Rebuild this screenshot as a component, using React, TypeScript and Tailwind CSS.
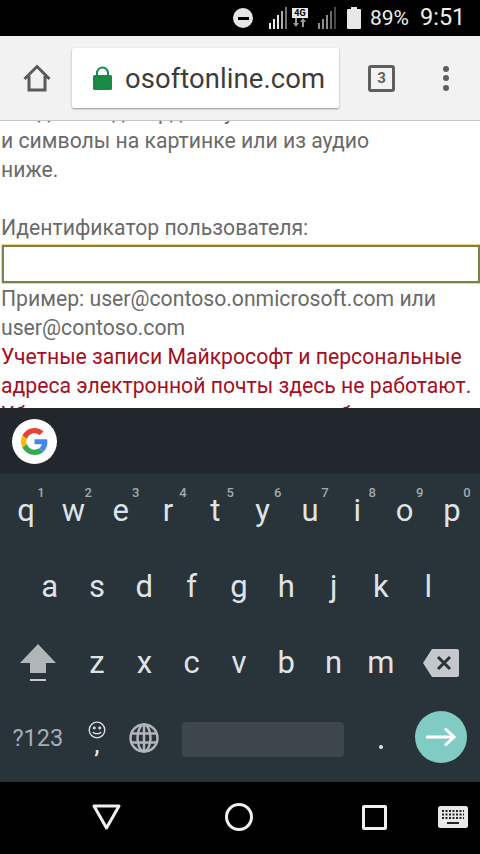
import type { ReactNode } from "react";

const topRow: Array<[string, string]> = [
  ["q", "1"],
  ["w", "2"],
  ["e", "3"],
  ["r", "4"],
  ["t", "5"],
  ["y", "6"],
  ["u", "7"],
  ["i", "8"],
  ["o", "9"],
  ["p", "0"]
];
const middleRow = ["a", "s", "d", "f", "g", "h", "j", "k", "l"];
const bottomRow = ["z", "x", "c", "v", "b", "n", "m"];

function Key({ label, hint }: { label: string; hint?: string }) {
  return (
    <div className="relative flex h-full w-[47.33px] items-center justify-center pb-[4px] text-[31px] leading-none text-[#dfe3e6]">
      {label}
      {hint && (
        <span className="absolute top-[12px] right-[5px] text-[13px] leading-none font-medium text-[#a3a9ad]">
          {hint}
        </span>
      )}
    </div>
  );
}

function SignalBars({ color }: { color: string }) {
  return (
    <svg width="18" height="22" viewBox="0 0 18 22" fill={color}>
      <rect x="0" y="16" width="2" height="6" />
      <rect x="4" y="12" width="2" height="10" />
      <rect x="8" y="8" width="2" height="14" />
      <rect x="12" y="4" width="2" height="18" opacity="0.75" />
      <rect x="16" y="0" width="2" height="22" opacity="0.5" />
    </svg>
  );
}

function StatusBar() {
  return (
    <div className="flex h-9 shrink-0 items-center bg-black pl-[233px] text-white">
      <div className="flex h-5 w-5 items-center justify-center rounded-full bg-[#e6e6e6]">
        <div className="h-[3px] w-[11px] bg-black" />
      </div>
      <div className="ml-[16px]">
        <SignalBars color="#e8e8e8" />
      </div>
      <div className="ml-[5px] flex w-[16px] flex-col items-center self-start pt-[8px]">
        <div className="flex h-[10px] w-[16px] items-center justify-center bg-[#e8e8e8] text-[9px] leading-none font-bold text-black">
          4G
        </div>
        <svg width="14" height="9" viewBox="0 0 14 9" fill="#9a9a9a">
          <path d="M2 0h2v5h2L3 9 0 5h2zM10 0l3 4h-2v5H9V4H7z" />
        </svg>
      </div>
      <div className="ml-[10px]">
        <SignalBars color="#8d8d8d" />
      </div>
      <svg className="ml-[11px]" width="14" height="22" viewBox="0 0 14 22" fill="#e8e8e8">
        <path d="M4 0h6v2h3a1 1 0 0 1 1 1v18a1 1 0 0 1-1 1H1a1 1 0 0 1-1-1V3a1 1 0 0 1 1-1h3z" />
      </svg>
      <span className="ml-[9px] text-[21px] leading-none text-[#eeeeee]">89%</span>
      <span className="ml-[11px] text-[23.500px] leading-none text-[#eeeeee]">9:51</span>
    </div>
  );
}

function Toolbar() {
  return (
    <div className="flex h-[85px] shrink-0 items-center border-b border-[#c4c4c4] bg-[#f2f2f2]">
      <svg className="ml-[23px]" width="28" height="28" viewBox="0 0 28 28" fill="none" stroke="#5a5a5a" strokeWidth="3">
        <path d="M1.500 15 14 2.500 26.500 15M6 12v14h16V12" strokeLinejoin="miter" />
      </svg>
      <div className="ml-[21px] flex h-[60px] w-[267px] items-center rounded-[2px] bg-white pl-[21px] shadow-[0_1px_2px_rgba(0,0,0,0.4)]">
        <svg width="19" height="24" viewBox="0 0 19 24" fill="#188a45">
          <path d="M4 10V7a5.500 5.500 0 0 1 11 0v3" fill="none" stroke="#188a45" strokeWidth="2" />
          <rect x="0" y="9" width="19" height="15" rx="1.500" />
        </svg>
        <span className="ml-[13px] pt-[4px] text-[27.400px] leading-none tracking-[0.1px] text-[#3c3c3c]">osoftonline.com</span>
      </div>
      <div className="ml-[29px] flex h-[27px] w-[27px] items-center justify-center rounded-[3px] border-[3px] border-[#5f5f5f] text-[15px] leading-none font-bold text-[#5f5f5f]">
        3
      </div>
      <div className="ml-[48px] flex flex-col gap-[3.500px]">
        <div className="h-[6px] w-[6px] rounded-full bg-[#5f5f5f]" />
        <div className="h-[6px] w-[6px] rounded-full bg-[#5f5f5f]" />
        <div className="h-[6px] w-[6px] rounded-full bg-[#5f5f5f]" />
      </div>
    </div>
  );
}

function PageContent() {
  return (
    <div className="h-[287px] shrink-0 overflow-hidden bg-white pl-[1px] text-[21.200px] leading-[29px] text-[#6a6a6a]">
      <div className="-mt-[24px] whitespace-nowrap">
        <p>Введите подтвердив буквы</p>
        <p>и символы на картинке или из аудио</p>
        <p>ниже.</p>
        <p className="mt-[29px]">Идентификатор пользователя:</p>
        <div className="mt-[3px] mb-[1px] ml-[1px] h-[38px] w-[478px] border-2 border-[#7d8048] bg-white shadow-[0_0_0_1px_#f0d48c]" />
        <p>Пример: user@contoso.onmicrosoft.com или</p>
        <p>user@contoso.com</p>
        <div className="text-[#a50e1e]">
          <p>Учетные записи Майкрософт и персональные</p>
          <p>адреса электронной почты здесь не работают.</p>
          <p>Убедитесь, что вы используете рабочую</p>
        </div>
      </div>
    </div>
  );
}

function GoogleLogo() {
  return (
    <div className="flex h-[45px] w-[45px] items-center justify-center rounded-full bg-white">
      <svg width="27" height="27" viewBox="0 0 48 48">
        <path fill="#EA4335" d="M24 9.500c3.500 0 6.700 1.200 9.200 3.600l6.900-6.900C35.900 2.400 30.500 0 24 0 14.600 0 6.500 5.400 2.600 13.200l8 6.200C12.400 13.700 17.700 9.500 24 9.500z" />
        <path fill="#4285F4" d="M46.900 24.500c0-1.600-.1-3.100-.4-4.500H24v9h12.900c-.6 3-2.200 5.500-4.700 7.200l7.700 6c4.500-4.200 7-10.300 7-17.700z" />
        <path fill="#FBBC05" d="M10.500 28.600c-.5-1.400-.8-3-.8-4.600s.3-3.200.8-4.600l-8-6.200C.9 16.500 0 20.100 0 24s.9 7.500 2.600 10.800l7.900-6.200z" />
        <path fill="#34A853" d="M24 48c6.500 0 11.900-2.100 15.900-5.800l-7.700-6c-2.200 1.400-4.900 2.300-8.200 2.300-6.300 0-11.600-4.200-13.500-9.900l-8 6.200C6.500 42.600 14.600 48 24 48z" />
      </svg>
    </div>
  );
}

function KeyRow({ children, className }: { children: ReactNode; className: string }) {
  return <div className={`flex items-stretch ${className}`}>{children}</div>;
}

function Keyboard() {
  return (
    <div className="flex-1 bg-[#29333a]">
      <div className="flex h-[66px] items-center bg-[#21272c] pl-[12px]">
        <GoogleLogo />
      </div>
      <KeyRow className="h-[76px] pl-[2.330px]">
        {topRow.map(([label, hint]) => (
          <Key key={label} label={label} hint={hint} />
        ))}
      </KeyRow>
      <KeyRow className="h-[76px] pl-[26px]">
        {middleRow.map((label) => (
          <Key key={label} label={label} />
        ))}
      </KeyRow>
      <KeyRow className="h-[76px] pl-[2.330px]">
        <div className="flex w-[71px] items-center justify-center pb-[2px]">
          <svg width="36" height="38" viewBox="0 0 36 38" fill="#b0b5b8">
            <path d="M18 0 36 19H26V29H10V19H0z" />
            <rect x="10" y="35" width="16" height="2" fill="#c4c8ca" />
          </svg>
        </div>
        {bottomRow.map((label) => (
          <Key key={label} label={label} />
        ))}
        <div className="flex w-[73px] items-center justify-center pb-[2px]">
          <svg width="36" height="28" viewBox="0 0 36 28">
            <path d="M9 0h25a2 2 0 0 1 2 2v24a2 2 0 0 1-2 2H9L0 14z" fill="#c4c7cb" />
            <path d="M15 8l12 12M27 8 15 20" stroke="#29333a" strokeWidth="3" />
          </svg>
        </div>
      </KeyRow>
      <KeyRow className="h-[80px] pl-[2.330px]">
        <div className="flex w-[71px] items-center justify-center pb-[6px] text-[23.500px] leading-none text-[#a8adb1]">
          ?123
        </div>
        <div className="flex w-[47.33px] flex-col items-center justify-center pb-[8px] leading-none text-[#dfe3e6]">
          <svg width="18" height="18" viewBox="0 0 18 18" fill="none" stroke="#dfe3e6" strokeWidth="1.300">
            <circle cx="9" cy="9" r="7.800" />
            <circle cx="6.300" cy="7" r="0.800" fill="#dfe3e6" />
            <circle cx="11.700" cy="7" r="0.800" fill="#dfe3e6" />
            <path d="M5 11c1 2.200 7 2.200 8 0" />
          </svg>
          <span className="h-[16px] text-[24px] leading-[12px] font-medium">,</span>
        </div>
        <div className="flex w-[47.33px] items-center justify-center pb-[8px]">
          <svg width="30" height="30" viewBox="0 0 30 30" fill="none" stroke="#b0b5b8" strokeWidth="2.500">
            <circle cx="15" cy="15" r="13.500" />
            <ellipse cx="15" cy="15" rx="6.500" ry="13.500" />
            <path d="M15 1.500v27M2.500 10.500h25M2.500 19.500h25" />
          </svg>
        </div>
        <div className="flex w-[189.700px] items-center justify-center pb-[6px]">
          <div className="h-[35px] w-[162px] rounded-[4px] bg-[#3c464c]" />
        </div>
        <div className="flex w-[47.33px] items-end justify-center pb-[33px]">
          <div className="h-[4px] w-[4px] rounded-full bg-[#dfe3e6]" />
        </div>
        <div className="flex w-[72px] items-center justify-center pb-[10px]">
          <div className="flex h-[52px] w-[52px] items-center justify-center rounded-full bg-[#80cbc4]">
            <svg width="30" height="20" viewBox="0 0 30 20" fill="none" stroke="#ffffff" strokeWidth="3">
              <path d="M0 10h28M19 1.500 28 10l-9 8.500" />
            </svg>
          </div>
        </div>
      </KeyRow>
    </div>
  );
}

function NavBar() {
  return (
    <div className="flex h-[72px] shrink-0 items-center bg-black pb-[2px]">
      <svg className="ml-[92px]" width="29" height="26" viewBox="0 0 29 26" fill="none" stroke="#f0f0f0" strokeWidth="3" strokeLinejoin="round">
        <path d="M2 2h25L14.500 24z" />
      </svg>
      <div className="ml-[104px] h-[28px] w-[28px] rounded-full border-[3px] border-[#f0f0f0]" />
      <div className="ml-[109px] h-[25px] w-[25px] rounded-[2px] border-[3px] border-[#f0f0f0]" />
      <svg className="ml-[51px]" width="30" height="22" viewBox="0 0 30 22">
        <rect width="30" height="22" rx="2.500" fill="#e8e8e8" />
        <path d="M4 5h22M4 8.500h22M4 12h22" stroke="#222222" strokeWidth="2" strokeDasharray="2 1.500" />
        <rect x="9" y="16" width="12" height="2" fill="#222222" />
      </svg>
    </div>
  );
}

export default function App() {
  return (
    <div className="flex h-[854px] w-[480px] flex-col overflow-hidden bg-white font-['Roboto',sans-serif]">
      <StatusBar />
      <Toolbar />
      <PageContent />
      <Keyboard />
      <NavBar />
    </div>
  );
}
